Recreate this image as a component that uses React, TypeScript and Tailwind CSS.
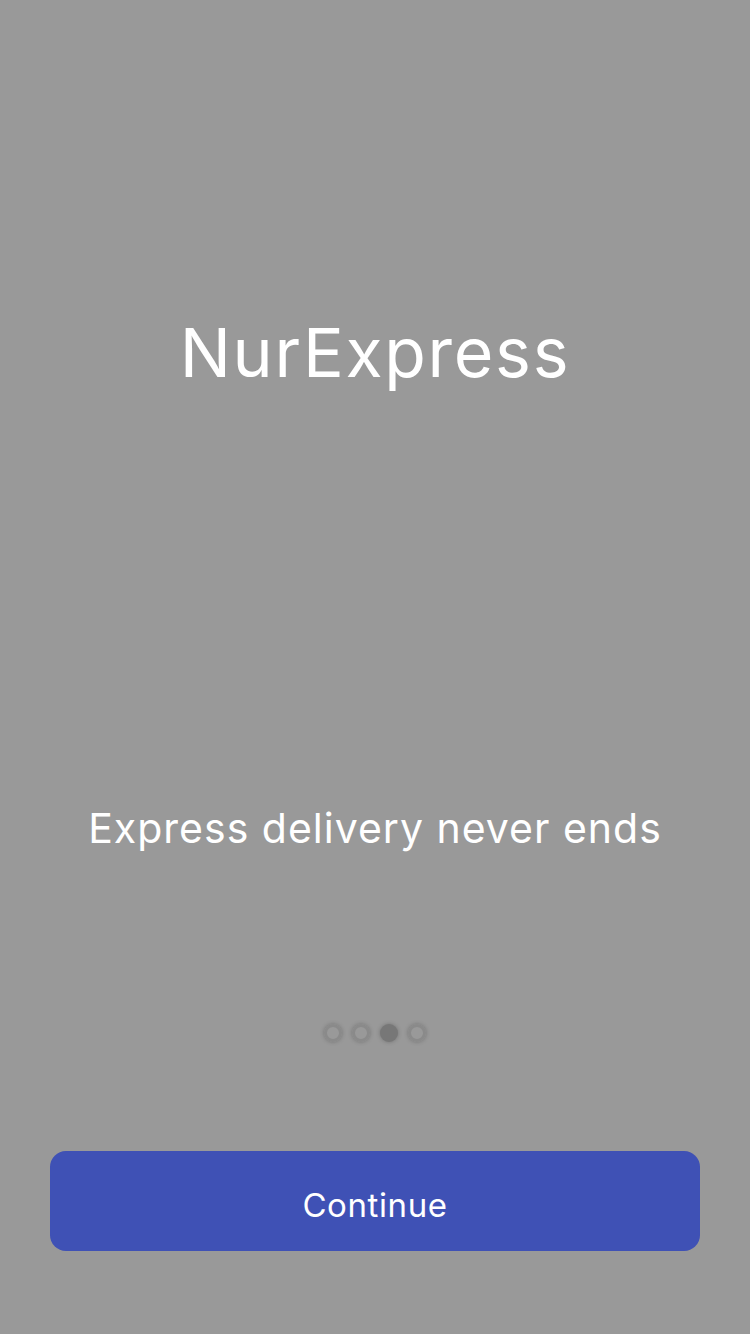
import React from "react";

const dots = [false, false, true, false];

export default function App() {
  return (
    <div
      className="flex min-h-[1334px] w-full flex-col items-center bg-[#999999] text-white"
      style={{ fontFamily: "Inter, 'Noto Sans', sans-serif" }}
    >
      {/* Brand */}
      <h1 className="mt-[312px] text-[68px] font-normal leading-[80px] tracking-[1.7px]">
        NurExpress
      </h1>

      {/* Tagline */}
      <p className="mt-[411px] text-[41px] font-normal leading-[50px] tracking-[1px]">
        Express delivery never ends
      </p>

      {/* Pager dots */}
      <div className="mt-[171px] flex gap-[10px]">
        {dots.map((active, i) => (
          <span
            key={i}
            className={
              active
                ? "h-[18px] w-[18px] rounded-full bg-[#777777] shadow-[0_0_4px_rgba(0,0,0,0.25)]"
                : "h-[18px] w-[18px] rounded-full border-[3px] border-[#8a8a8a] shadow-[0_0_4px_rgba(0,0,0,0.25)]"
            }
          />
        ))}
      </div>

      {/* Action */}
      <div className="mt-[109px] w-full px-[50px]">
        <button className="flex h-[100px] w-full items-center justify-center rounded-[16px] bg-[#3f51b5] pt-[10px] text-[33px] tracking-[0.6px] text-white">
          Continue
        </button>
      </div>
    </div>
  );
}
